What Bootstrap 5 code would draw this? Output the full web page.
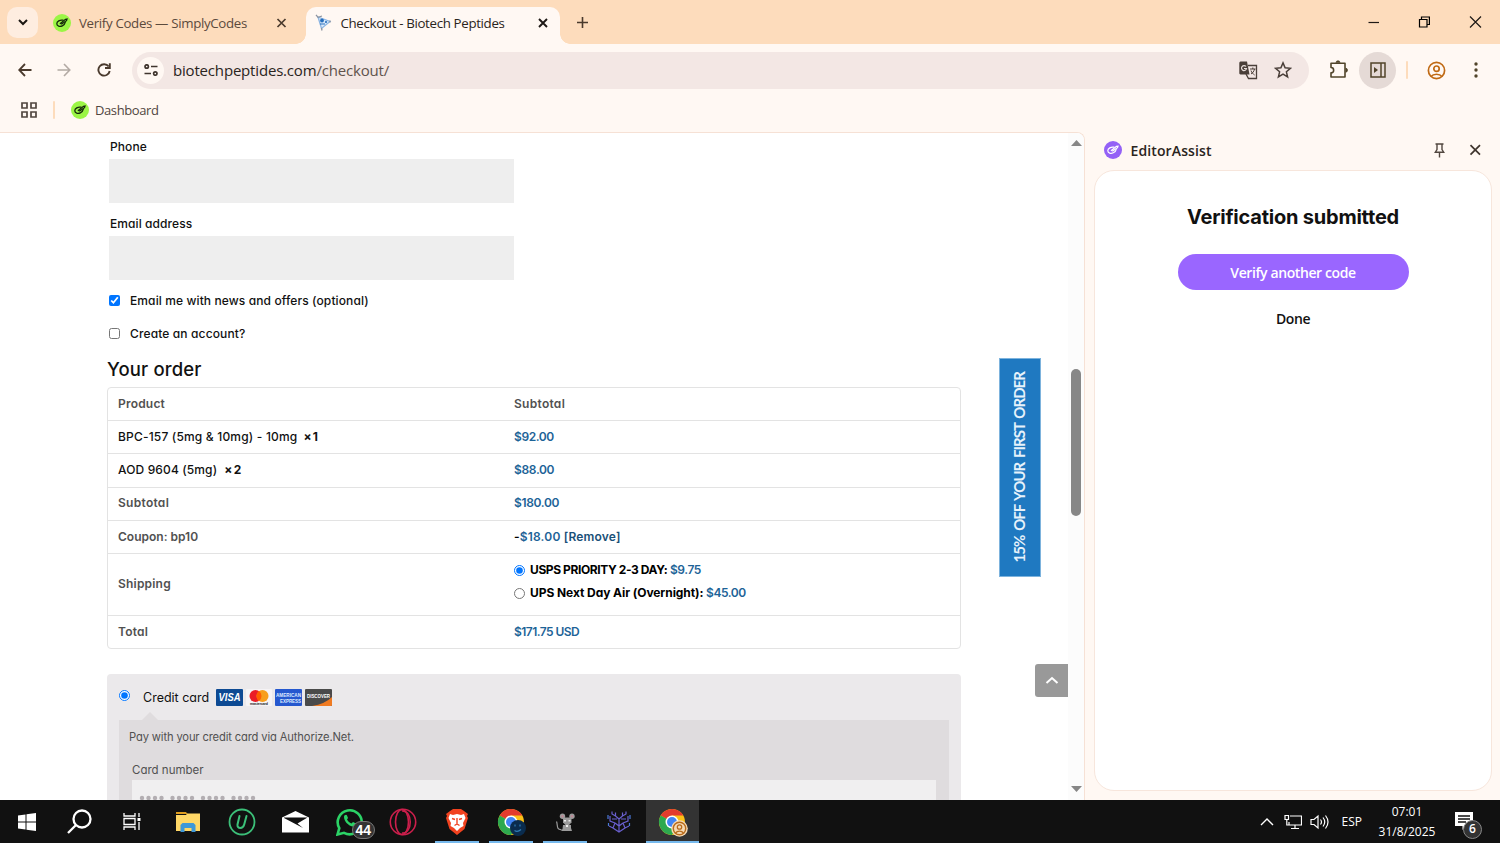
<!DOCTYPE html>
<html lang="en">
<head>
<meta charset="utf-8">
<title>Checkout - Biotech Peptides</title>
<link href="https://cdn.jsdelivr.net/npm/bootstrap@5.3.0/dist/css/bootstrap.min.css" rel="stylesheet">
<style>
html,body{height:100%;overflow:hidden}
body{font-family:"Open Sans","Noto Sans",sans-serif;background:#fff8f3;color:#222;font-size:14px;line-height:20px}
svg{display:block;flex:none}
span,b{white-space:nowrap}
.screen{width:1500px;height:843px}
.tabstrip{height:44px;background:#fddcbc;padding-left:7px}
.tabsearch{width:31px;height:31px;border-radius:10px;background:#feede0}
.tab-idle{width:268px;padding:2px 0 0 16px}
.tab-on{width:254px;height:37px;background:#fff8f3;border-radius:10px 10px 0 0;padding:0 0 5px 9px;position:relative}
.tab-on:before,.tab-on:after{content:"";position:absolute;bottom:0;width:10px;height:10px;background:radial-gradient(circle at 0 0,transparent 9.5px,#fff8f3 10px)}
.tab-on:before{left:-10px}
.tab-on:after{right:-10px;background:radial-gradient(circle at 100% 0,transparent 9.5px,#fff8f3 10px)}
.toolrow{height:52px}
.pillbar{width:1177px;height:37px;border-radius:19px;background:#f3e7e4;padding-left:5px}
.siteinfo{width:27px;height:27px;border-radius:50%;background:#fff8f3}
.panelbtn{width:37px;height:37px;border-radius:50%;background:#e5dad6}
.sep{width:2px;height:18px;background:#fddcbc;border-radius:1px}
.bookrow{height:36px;padding-left:21px}
.main{height:668px}
.pageview{width:1085px;border:1px solid #f6e1d5;border-left:0;border-bottom:0;border-radius:0 8px 0 0;background:#fff;overflow:hidden;position:relative}
.shop{font-family:Inter,"Open Sans",sans-serif;font-feature-settings:"cv11","ss03";color:#111;font-size:12px;font-weight:500;width:1067px;padding:4px 0 0 107px}
.lbl{height:20px;padding-left:3px}
.field{width:405px;height:44px;margin-left:2px;background:#eee}
.chk{height:20px;padding-left:2px}
.chk input,.pick input{width:11px;height:11px;margin:0;flex:none}
.ttl{font-size:18.5px;height:30px;line-height:32px}
.order{width:854px;height:262px;border:1px solid #e3e3e3;border-radius:4px}
.line{border-top:1px solid #e3e3e3;padding-left:10px}
.line:first-child{border-top:0}
.line>:first-child{width:396px}
.hd{font-weight:600;color:#515151}
.amt{font-weight:600;color:#1d6397}
.up{padding-bottom:1px}
.up2{padding-bottom:2px}
.pay{width:854px;height:140px;background:#ebe9eb;border-radius:4px}
.payinner{width:830px;height:100px;margin-left:12px;background:#dfdcde;color:#515151;font-weight:400;font-size:11.5px;position:relative}
.payinner:before{content:"";position:absolute;left:23px;top:-8px;border:8px solid transparent;border-top:0;border-bottom-color:#dfdcde}
.cardno{width:804px;height:40px;margin-left:13px;background:#f0eff0;padding:14px 0 0 7px}
.promo{position:absolute;left:999px;top:225px;width:42px;height:219px;background:#1f79c1;border:1px solid #7db3dd;font-family:Lato,Inter,sans-serif;font-weight:700;color:#e6f2fb;font-size:15px;word-spacing:2px;padding-right:2px}
.promo span{writing-mode:vertical-rl;transform:rotate(180deg)}
.totop{position:absolute;left:1035px;top:530.5px;width:33px;height:33px;background:#999;border-radius:3px 0 0 3px}
.scroller{position:absolute;right:0;top:0;width:16px;height:667px;background:#fcfcfc}
.thumb{width:10px;height:147px;border-radius:5px;background:#878787}
.side{width:415px;padding-left:8px}
.sidehead{height:38px;padding:0 19px 2px 11px}
.sidecard{width:398px;height:621px;margin-left:1px;background:#fff;border:1px solid #f7e6dc;border-radius:20px}
.cta{width:231px;height:36px;border-radius:18px;background:#9a66ff;color:#fff;font-weight:600;padding-top:2px}
.taskbar{height:43px;background:#111}
.task{width:53.8px;height:43px;position:relative}
.task.run:after{content:"";position:absolute;bottom:0;left:5px;right:5px;height:2px;background:#76b9ed}
.task.cur{background:#333}
.task.cur:after{left:0;right:0}
.tray{color:#fff;font-size:12px;margin-left:auto}
.t1{font-size:13.3px;letter-spacing:-.34px}.t2{font-size:13.3px;letter-spacing:-.34px}.t3{letter-spacing:-.18px}.t4{font-size:13px;letter-spacing:-.4px}
.p1,.p2{letter-spacing:.08px}.p3{letter-spacing:.11px}.p4{letter-spacing:.13px}.p5{letter-spacing:.16px}
.q1,.r4,.r9{letter-spacing:.2px}.q2,.q9{letter-spacing:.28px}.q3{letter-spacing:.18px}.q4,.q7{letter-spacing:-.3px;word-spacing:-1px}.q5,.r6,.r8{letter-spacing:-.42px}.q6{letter-spacing:.13px}.q8,.r1{letter-spacing:-.34px}
.r3{letter-spacing:.18px}.r5{letter-spacing:-.4px}.r7{letter-spacing:-.07px}.s1{letter-spacing:-.54px}.s3{font-size:11.2px;letter-spacing:-.14px}
.v1{letter-spacing:-.95px}.t5{letter-spacing:.12px}.t6{letter-spacing:-.22px}.t7,.t8{letter-spacing:-.4px}
</style>
</head>
<body>
<svg width="0" height="0" class="position-absolute">
<defs>
<g id="pen"><circle cx="9" cy="9" r="9"/><g fill="none" stroke="#14280a" stroke-width="1.300" stroke-linecap="round"><path d="M10 6.200C7 5.500 3.800 7.500 3.800 9.800c0 2.300 3 3.200 5.500 2 1.700-.8 2.700-2 2.900-3.300"/><path d="M7.300 9.500 12.500 5.300 14 5.100 13.500 6.700 8.700 10"/></g></g>
<g id="chrome"><circle cx="14" cy="14" r="13" fill="#fbc116"/><path d="M14 14 2.740 7.500A13 13 0 0 1 25.260 7.500H14z" fill="#e33b2e"/><path d="M14 14 2.740 7.500A13 13 0 0 0 14 27l5.600-9.700z" fill="#2da94f"/><circle cx="14" cy="14" r="6.500" fill="#fff"/><circle cx="14" cy="14" r="5" fill="#4285f4"/></g>
</defs>
</svg>
<div class="screen d-flex flex-column">
<header class="tabstrip d-flex align-items-end">
  <div class="tabsearch d-flex align-items-center justify-content-center align-self-start" style="margin-top:7px"><svg width="10" height="7" fill="none" stroke="#1b1713" stroke-width="2"><path d="M1 1l4 4 4-4"/></svg></div>
  <div class="tab-idle d-flex align-items-center h-100"><svg style="margin-left:-1px" width="18" height="18" fill="#9bf545"><use href="#pen"/></svg><span class="t1" style="margin-left:8px;color:#5b4a3c">Verify Codes — SimplyCodes</span><svg class="ms-auto" style="margin-right:19px" width="11" height="11" stroke="#4a3a2d" stroke-width="1.700"><path d="M1.500 1l8 8m0-8l-8 8"/></svg></div>
  <div class="tab-on d-flex align-items-center"><svg width="17" height="18" viewBox="0 0 17 18" fill="none"><path d="M3 3l12 4.500L6.500 14.500z" stroke="#8db6e3" stroke-width="1.300" fill="#dceafa"/><path d="M1 .8l2 2.500L7 2M6.500 14l.5 2.500M15 6.500v2" stroke="#8b93a0" stroke-width="1.300"/><circle cx="7" cy="6.500" r="1.900" fill="#276fbd"/><circle cx="11" cy="8" r="1.100" fill="#276fbd"/><path d="M5 10h5" stroke="#276fbd"/></svg><span class="t2" style="margin-left:8.500px;color:#2a2420">Checkout - Biotech Peptides</span><svg class="ms-auto" style="margin-right:12px;margin-top:-1px" width="10" height="10" stroke="#1e1916" stroke-width="1.900"><path d="M1 1l8 8m0-8l-8 8"/></svg></div>
  <svg class="align-self-center" style="margin-left:17px" width="11" height="11" stroke="#4a3a2d" stroke-width="1.600"><path d="M5.500 0v11M0 5.500h11"/></svg>
  <div class="ms-auto d-flex align-items-center h-100" style="padding-right:18px;gap:39px">
    <svg width="12" height="12" stroke="#1e1916" stroke-width="1.200"><path d="M1.500 6.500h11"/></svg>
    <svg width="12" height="12" fill="none" stroke="#000" stroke-width="1.200"><path d="M1.500 3.500h7.500V11H1.500zM3.500 3.500V1H11.400v7.500H9"/></svg>
    <svg width="13" height="12" stroke="#1e1916" stroke-width="1.200"><path d="M1 .5l11 11m0-11l-11 11"/></svg>
  </div>
</header>
<div class="toolrow d-flex align-items-center">
  <svg style="margin-left:18px" width="14" height="14" fill="none" stroke="#4a3a2d" stroke-width="1.800"><path d="M13.500 7H1.500M7 1L1.200 7 7 13"/></svg>
  <svg style="margin-left:25px" width="14" height="14" fill="none" stroke="#b3aaa4" stroke-width="1.600"><path d="M.5 7h12M7 1l5.800 6L7 13"/></svg>
  <svg style="margin-left:26px" width="14" height="14" fill="none" stroke="#4a3a2d" stroke-width="1.900"><path d="M11.700 3.500A5.700 5.700 0 1 0 12.700 8"/><path d="M12.800 .3V5H8"/></svg>
  <div class="pillbar d-flex align-items-center" style="margin-left:21px">
    <div class="siteinfo d-flex align-items-center justify-content-center"><svg width="14" height="12" fill="none" stroke="#40352e" stroke-width="1.700"><circle cx="2.700" cy="2.500" r="1.700"/><path d="M7 2.500h6.500M.5 9.500H7"/><circle cx="11.300" cy="9.500" r="1.700"/></svg></div>
    <span class="t3" style="margin-left:9px;margin-top:-1px;color:#2a2420;font-size:15px">biotechpeptides.com<span style="color:#60534c">/checkout/</span></span>
    <div class="ms-auto d-flex align-items-center" style="padding-right:17px;gap:16px">
      <svg width="19" height="19" viewBox="0 0 19 19"><path d="M9 4.500h8.500V17.500H9.500L7 13" fill="none" stroke="#4a3f39" stroke-width="1.300"/><path d="M1.500.5h6.500l2.500 13H1.500A1.300 1.300 0 0 1 .3 12V2A1.500 1.500 0 0 1 1.500.5z" fill="#4a3f39"/><path d="M7 5.500A2.500 2.500 0 1 0 7.500 7.500H5" fill="none" stroke="#e9dfdc" stroke-width="1.200"/><path d="M11 8h5.500M13.800 6.500V8M15.500 8c-.5 2.500-2 4-3.500 5M12 9.500c.6 2 2 3.500 3.600 4.500" fill="none" stroke="#4a3f39"/></svg>
      <svg width="18" height="18" viewBox="0 0 18 18" fill="none" stroke="#4a3f39" stroke-width="1.500"><path d="M9 1.900l2.100 4.900 5.300.5-4 3.500 1.200 5.200L9 13.200 4.400 16l1.200-5.200-4-3.500 5.300-.5z"/></svg>
    </div>
  </div>
  <svg style="margin-left:20px;margin-top:-2px" width="19" height="19" viewBox="0 0 19 19" fill="none" stroke="#51442a" stroke-width="1.600"><path d="M2 3.300h14V17H2v-4.200a2.600 2.600 0 0 0 0-5.300z" stroke-linejoin="round"/><path d="M7 2.800a2 2 0 0 1 4 0M16.500 8.200a2 2 0 0 1 0 4" fill="#51442a" stroke-width=".8"/></svg>
  <div class="panelbtn d-flex align-items-center justify-content-center" style="margin-left:11px"><svg width="16" height="16" viewBox="0 0 16 16" fill="none" stroke="#51442a" stroke-width="1.500"><path d="M1 1h14v14H1zM11 1v14"/><path d="M4 5l4 3-4 3z" fill="#51442a" stroke="none"/></svg></div>
  <div class="sep" style="margin-left:10px"></div>
  <svg style="margin-left:19px" width="19" height="19" viewBox="0 0 19 19" fill="none" stroke="#c06a14" stroke-width="1.700"><circle cx="9.500" cy="9.500" r="8.100"/><circle cx="9.500" cy="7.700" r="2.700"/><path d="M4 15.500c2.500-3 8.500-3 11 0"/></svg>
  <svg style="margin-left:28px" width="4" height="16" fill="#51442a"><circle cx="2" cy="2" r="1.700"/><circle cx="2" cy="8" r="1.700"/><circle cx="2" cy="14" r="1.700"/></svg>
</div>
<div class="bookrow d-flex align-items-center" style="padding-bottom:8px">
  <svg width="16" height="16" fill="none" stroke="#51463f" stroke-width="1.700"><path d="M1 1h5v5H1zM10 1h5v5h-5zM1 10h5v5H1zM10 10h5v5h-5z"/></svg>
  <div class="sep" style="margin-left:16px"></div>
  <svg style="margin-left:16px" width="18" height="18" fill="#9bf545"><use href="#pen"/></svg>
  <span class="t4" style="margin-left:6px;color:#51463f">Dashboard</span>
</div>
<div class="main d-flex">
  <section class="pageview">
    <div class="shop">
      <div class="lbl"><span class="p1">Phone</span></div>
      <div class="field" style="margin-top:1.500px"></div>
      <div class="lbl" style="margin-top:11.500px"><span class="p2">Email address</span></div>
      <div class="field" style="margin-top:1.500px"></div>
      <label class="chk d-flex align-items-center" style="margin-top:11px"><input type="checkbox" checked><span class="p3" style="margin-left:10px">Email me with news and offers (optional)</span></label>
      <label class="chk d-flex align-items-center" style="margin-top:13px"><input type="checkbox"><span class="p4" style="margin-left:10px">Create an account?</span></label>
      <div class="ttl" style="margin-top:9px"><span class="p5">Your order</span></div>
      <div class="order d-flex flex-column" style="margin-top:4.500px">
        <div class="line d-flex align-items-center hd" style="height:32px"><div><span class="q1">Product</span></div><span class="q2">Subtotal</span></div>
        <div class="line d-flex align-items-center" style="height:33px"><div><span class="q3">BPC-157 (5mg &amp; 10mg) - 10mg</span><b class="q4" style="margin-left:6px">× 1</b></div><span class="amt q5">$92.00</span></div>
        <div class="line up d-flex align-items-center" style="height:34px"><div><span class="q6">AOD 9604 (5mg)</span><b class="q7" style="margin-left:7px">× 2</b></div><span class="amt q8">$88.00</span></div>
        <div class="line up2 d-flex align-items-center" style="height:33px"><div class="hd"><span class="q9">Subtotal</span></div><span class="amt r1">$180.00</span></div>
        <div class="line d-flex align-items-center" style="height:33px"><div class="hd"><span class="r2">Coupon: bp10</span></div><span class="amt r3"><span class="text-black">-</span>$18.00 <span style="color:#1a5078">[Remove]</span></span></div>
        <div class="line d-flex align-items-center" style="height:62px"><div class="hd up"><span class="r4">Shipping</span></div><div class="pick fw-bold text-black" style="padding-bottom:6px"><label class="d-flex align-items-center" style="height:23px"><input type="radio" name="s" checked><span class="r5" style="margin-left:5px">USPS PRIORITY 2-3 DAY:</span><span class="amt r6" style="margin-left:2.500px">$9.75</span></label><label class="d-flex align-items-center" style="height:23px"><input type="radio" name="s"><span class="r7" style="margin-left:5px">UPS Next Day Air (Overnight):</span><span class="amt r8" style="margin-left:2.500px">$45.00</span></label></div></div>
        <div class="line up d-flex align-items-center" style="height:33px"><div class="hd"><span class="r9">Total</span></div><span class="amt s1">$171.75 USD</span></div>
      </div>
      <div class="pay" style="margin-top:25px">
        <label class="pick d-flex align-items-center" style="height:46px;padding:1px 0 0 12px"><input type="radio" name="c" checked style="margin-bottom:4px"><span class="s2" style="margin-left:13px;font-weight:400;font-size:12.500px">Credit card</span>
          <svg style="margin-left:6.500px" width="117" height="17" viewBox="0 0 117 17"><rect width="27" height="17" rx="1" fill="#0d4a93"/><text x="2.500" y="12" font-family="Liberation Sans" font-weight="700" font-style="italic" font-size="10" fill="#fff" textLength="22" lengthAdjust="spacingAndGlyphs">VISA</text><rect x="30" width="26" height="17" rx="1" fill="#f5f3f5"/><circle cx="39.500" cy="7" r="6" fill="#eb1c26"/><circle cx="46.500" cy="7" r="6" fill="#f79e1b"/><path d="M43 2.100a6 6 0 0 1 0 9.800a6 6 0 0 1 0-9.800z" fill="#ff5f00"/><text x="34" y="16" font-family="Liberation Sans" font-weight="700" font-size="3.500" fill="#222" textLength="18">mastercard</text><rect x="59" width="27" height="17" rx="1" fill="#2558cf"/><text x="60" y="7.500" font-family="Liberation Sans" font-weight="700" font-size="5" fill="#dfe9ff" textLength="25" lengthAdjust="spacingAndGlyphs">AMERICAN</text><text x="64" y="13.800" font-family="Liberation Sans" font-weight="700" font-size="5" fill="#dfe9ff" textLength="21" lengthAdjust="spacingAndGlyphs">EXPRESS</text><rect x="89" width="27" height="17" rx="1" fill="#4a4a4a"/><path d="M116 8v8a1 1 0 0 1-1 1H96Q109 15 116 8z" fill="#f07b22"/><text x="91" y="9" font-family="Liberation Sans" font-weight="700" font-size="5" fill="#fff" textLength="23" lengthAdjust="spacingAndGlyphs">DISCOVER</text></svg>
        </label>
        <div class="payinner">
          <div style="padding:7px 0 0 10px;height:27px"><span class="s3">Pay with your credit card via Authorize.Net.</span></div>
          <div style="padding:13px 0 0 13px;height:33px"><span class="s4">Card number</span></div>
          <div class="cardno"><svg width="120" height="8" fill="#b3aeb2"><g id="dots"><circle cx="3" cy="4" r="2.200"/><circle cx="9.500" cy="4" r="2.200"/><circle cx="16" cy="4" r="2.200"/><circle cx="22.500" cy="4" r="2.200"/></g><use href="#dots" x="30.500"/><use href="#dots" x="61"/><use href="#dots" x="91.500"/></svg></div>
        </div>
      </div>
    </div>
    <div class="promo d-flex align-items-center justify-content-center"><span class="v1">15% OFF YOUR FIRST ORDER</span></div>
    <div class="scroller d-flex flex-column align-items-center"><svg style="margin-top:7px" width="11" height="6" fill="#878787"><path d="M0 6l5.500-6L11 6z"/></svg><div class="thumb" style="margin-top:223px"></div><svg class="mt-auto" style="margin-bottom:8px" width="11" height="6" fill="#878787"><path d="M0 0l5.500 6L11 0z"/></svg></div>
    <div class="totop d-flex align-items-center justify-content-center"><svg width="14" height="8" fill="none" stroke="#fff" stroke-width="2"><path d="M1.500 7l5.500-5L12.500 7"/></svg></div>
  </section>
  <aside class="side">
    <div class="sidehead d-flex align-items-center"><svg width="18" height="18" viewBox="0 0 18 18"><circle cx="9" cy="9" r="9" fill="#9461f6"/><g fill="none" stroke="#fff" stroke-width="1.200" stroke-linecap="round"><path d="M10 6.200C7 5.500 3.800 7.500 3.800 9.800c0 2.300 3 3.200 5.500 2 1.700-.8 2.700-2 2.900-3.300"/><path d="M7.300 9.500 12.500 5.300 14 5.100 13.500 6.700 8.700 10"/></g></svg><span class="t5" style="margin-left:8.500px;padding-top:1px;font-weight:600;color:#2a2420">EditorAssist</span><svg class="ms-auto" width="11" height="15" fill="none" stroke="#51463f" stroke-width="1.400"><path d="M1.500 1h8M3 1v5.500L1.300 9.200h8.400L8 6.500V1M5.500 9.500V14.500"/></svg><svg style="margin-left:24px" width="12" height="12" stroke="#40352e" stroke-width="1.700"><path d="M1.500 1.200l9.500 9.500m0-9.500l-9.500 9.500"/></svg></div>
    <div class="sidecard d-flex flex-column align-items-center">
      <span class="t6" style="margin-top:33.500px;height:24px;line-height:24px;font-family:Inter,sans-serif;font-weight:700;font-size:20px;color:#111">Verification submitted</span>
      <div class="cta d-flex align-items-center justify-content-center" style="margin-top:25.500px"><span class="t7">Verify another code</span></div>
      <span class="t8" style="margin-top:19px;font-weight:600;color:#111">Done</span>
    </div>
  </aside>
</div>
<footer class="taskbar d-flex">
  <div class="task d-flex align-items-center justify-content-center"><svg width="18" height="18" fill="#fff"><path d="M0 2.500l7.500-1V8.500H0zM8.500 1.300L18 0v8.500H8.500zM0 9.500h7.500v7L0 15.500zM8.500 9.500H18V18l-9.500-1.300z"/></svg></div>
  <div class="task d-flex align-items-center justify-content-center" style="padding-right:3px"><svg width="25" height="25" fill="none" stroke="#fff" stroke-width="2.300"><circle cx="15" cy="10" r="8.500"/><path d="M9 16l-8 8"/></svg></div>
  <div class="task d-flex align-items-center justify-content-center" style="padding-right:4px"><svg width="19" height="17" fill="none" stroke="#fff" stroke-width="1.300"><path d="M1 0v3h11V0M1 5.500h11v6H1zM1 17v-3h11v3M16 0v4M16 9v8"/><path d="M14.500 5h3v3h-3z" fill="#fff" stroke="none"/></svg></div>
  <div class="task d-flex align-items-center justify-content-center"><svg width="24" height="20"><path d="M0 0h10l1.500 2H0z" fill="#e09e1f"/><path d="M0 3h10l1-1.500h13V19H0z" fill="#ffd766"/><path d="M4.500 20v-7l2-2h11l2 2v7H15.500v-4h-7v4z" fill="#3f98d8"/></svg></div>
  <div class="task d-flex align-items-center justify-content-center"><svg width="28" height="28" fill="none" stroke="#3cc079"><circle cx="14" cy="14" r="12.500" stroke-width="1.800"/><path d="M11.500 8l-2 8.500c-.8 4.500 5.700 4.500 6.700 0L18.500 8" stroke-width="2" stroke-linecap="round"/></svg></div>
  <div class="task d-flex align-items-center justify-content-center"><svg width="27" height="22"><path d="M0 6.500L13.500 0 27 6.500V21.500H0z" fill="#fff"/><path d="M2 6.500h23.500L15.500 12.500l5.500 4.500L2 7z" fill="#111"/></svg></div>
  <div class="task d-flex align-items-center justify-content-center"><svg width="28" height="28"><path d="M1.500 26.500l1.800-6.300A12 12 0 1 1 8 24.800z" fill="none" stroke="#2bd366" stroke-width="2.600"/><path d="M8 9c0-2 2.500-3 3-1.500l1 2.500-1 1.500c1 2 2.500 3.200 4.500 4l1.500-1.500 3 1.500c1 2-2 3.500-3.500 3C12 17.500 8 13 8 9z" fill="#2bd366"/></svg><span class="position-absolute text-white d-flex align-items-center justify-content-center" style="left:29px;top:21px;width:23px;height:18px;border:1px solid #777;border-radius:9px;background:#333;font:700 14px 'Liberation Sans',sans-serif">44</span></div>
  <div class="task d-flex align-items-center justify-content-center"><svg width="28" height="28" fill="none" stroke="#cc1f4c" stroke-width="1.600"><circle cx="14" cy="14" r="12.700"/><ellipse cx="13" cy="14" rx="6.500" ry="12.500"/><path d="M13 3c11-1 11 23 0 22"/></svg></div>
  <div class="task run d-flex align-items-center justify-content-center"><svg width="24" height="28"><path d="M5 3l3-2h8l3 2 4 3-1 2 1 2-3.500 11L12 27l-7.500-6L1 10l1-2-1-2z" fill="#f1421f"/><path d="M5 6l3 1 4-1 4 1 3-1 1.500 4-2.500 5 .5 3-3.500 2L12 23l-3-3-3.500-2 .5-3-2.500-5z" fill="#fff"/><path d="M7 10.500l3 1M17 10.500l-3 1M12 10v6M9.500 17.500l2.500-1.500 2.500 1.500" stroke="#f1421f" stroke-width="1.400" fill="none"/></svg></div>
  <div class="task run d-flex align-items-center justify-content-center"><svg width="28" height="28"><use href="#chrome"/></svg><svg class="position-absolute" style="left:26px;top:20px" width="16" height="16"><circle cx="8" cy="8" r="8" fill="#0a2c4e"/><path d="M5 4.500v2m5-2v2M4.500 10.500q3 2 6.500-1" stroke="#2f7fb8" fill="none" stroke-width="1.200"/></svg></div>
  <div class="task run d-flex align-items-center justify-content-center"><svg width="20" height="18" fill="#9b9b9b"><circle cx="7.500" cy="3.300" r="2.700"/><circle cx="17" cy="3.300" r="2.700"/><path d="M8 4.500h8.500v5l-3 3h-2.500l-3-3z"/><path d="M8 12h8v3l1 3H6l1.500-2z"/><path d="M6.500 16.500C1 17 3 12 1.500 8.500" fill="none" stroke="#9b9b9b" stroke-width="1.200"/><path d="M9 7h2v1.500H9zM13.500 7h2v1.500h-2zM11 12h2v2h-2z" fill="#eee"/><circle cx="7.500" cy="3.300" r="1.200" fill="#bd8a96"/><circle cx="17" cy="3.300" r="1.200" fill="#bd8a96"/></svg></div>
  <div class="task d-flex align-items-center justify-content-center"><svg width="24" height="24" fill="none" stroke="#6a60cf" stroke-width="1.200"><path d="M12 9v13M12 9L8.500 6V2.500M12 9l3.500-3V2.500M8.500 6L5 4V1.500M15.500 6L19 4V1.500M8 13L3 11V6M16 13l5-2V6M8 13l4 3 4-3M8 13l-2 5-4-2M16 13l2 5 4-2M6 18l6 4 6-4M5 9h5M14 9h5"/><path d="M1 5v4M23 5v4M1.500 13v3M22.500 13v3" stroke="#4a79d8"/></svg></div>
  <div class="task run cur d-flex align-items-center justify-content-center"><svg width="28" height="28"><use href="#chrome"/></svg><svg class="position-absolute" style="left:25px;top:20px" width="17" height="17" fill="none"><circle cx="8.500" cy="8.500" r="8.300" fill="#f5d9b4"/><circle cx="8.500" cy="8.500" r="6.200" stroke="#b86b1b" stroke-width="1.400"/><circle cx="8.500" cy="7" r="2.200" stroke="#b86b1b" stroke-width="1.300"/><path d="M4.500 13c2-2.500 6-2.500 8 0" stroke="#b86b1b" stroke-width="1.300"/></svg></div>
  <div class="tray d-flex align-items-center">
    <svg style="margin-right:1px" width="14" height="8" fill="none" stroke="#fff" stroke-width="1.400"><path d="M1 7l6-6 6 6"/></svg>
    <svg style="margin-left:9px" width="18" height="16" fill="none" stroke="#fff" stroke-width="1.200"><path d="M6 2h11.500v9H5V8M11 11v3.500M7 14.500h8M1 1.500h3.500v4H1zM2.800 5.500V11H5"/></svg>
    <svg style="margin-left:8px" width="19" height="16" fill="none" stroke="#fff" stroke-width="1.200"><path d="M1 5.500h3L8 2v12l-4-3.500H1zM10.500 5.500q2 2.500 0 5M13 3.500q3.500 4.500 0 9M15.500 1.500q5 6.500 0 13"/></svg>
    <span class="t9" style="margin-left:12.500px">ESP</span>
    <div class="text-center" style="width:60px;margin-left:15px;line-height:20px;padding-top:1px"><span class="u1">07:01</span><br><span class="u2">31/8/2025</span></div>
    <div class="position-relative" style="margin-left:18px;width:45px"><svg width="18" height="18" style="margin-top:-2px"><path d="M0 0h18v14h-7l-3.500 4V14H0z" fill="#fff"/><path d="M3 4h12M3 7h12M3 10h8" stroke="#111" stroke-width="1.300"/></svg><span class="position-absolute d-flex align-items-center justify-content-center" style="left:8px;top:6px;width:19px;height:19px;border:1px solid #888;border-radius:50%;background:#333;font-weight:600">6</span></div>
  </div>
</footer>
</div>
<script src="https://cdn.jsdelivr.net/npm/bootstrap@5.3.0/dist/js/bootstrap.bundle.min.js"></script>
</body>
</html>
